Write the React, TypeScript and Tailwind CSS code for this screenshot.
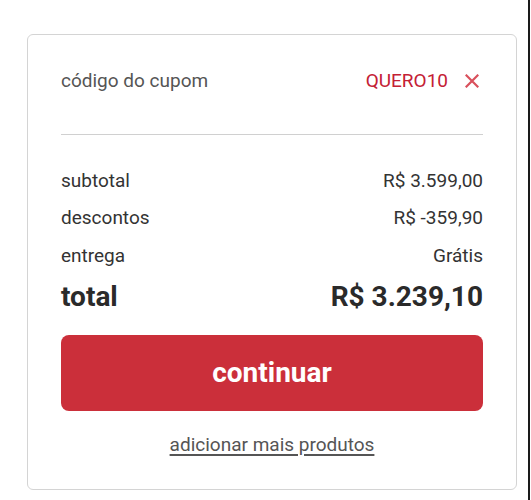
import React from "react";

export default function App() {
  return (
    <div
      className="relative w-[531px] h-[500px] bg-white overflow-hidden"
      style={{ fontFamily: "Roboto, 'Liberation Sans', sans-serif" }}
    >
      <div className="absolute right-[1px] top-0 h-full w-[2px] bg-[#1a1a1a]" />
      <div className="pl-[27px] pt-[34px]">
        <div className="w-[490px] rounded-[6px] border border-[#d4d4d4] bg-white px-[33px] pb-[32px]">
          <div className="flex h-[92px] items-center justify-between">
            <span className="text-[19px] leading-[24px] text-[#555555]">código do cupom</span>
            <div className="flex items-center gap-[17px]">
              <span className="text-[19px] leading-[24px] text-[#c42034]">QUERO10</span>
              <svg width="14" height="14" viewBox="0 0 14 14" className="mr-[4px]">
                <path d="M1.5 1.5 L12.5 12.5 M12.5 1.5 L1.5 12.5" stroke="#d9505c" strokeWidth="2.2" strokeLinecap="square" />
              </svg>
            </div>
          </div>
          <div className="mt-[7px] h-px bg-[#d0d0d0]" />
          <div className="mt-[32px] flex flex-col gap-[9.5px]">
            <div className="flex h-[28px] items-center justify-between text-[19px] text-[#333333]">
              <span>subtotal</span>
              <span>R$ 3.599,00</span>
            </div>
            <div className="flex h-[28px] items-center justify-between text-[19px] text-[#333333]">
              <span>descontos</span>
              <span>R$ -359,90</span>
            </div>
            <div className="flex h-[28px] items-center justify-between text-[19px] text-[#333333]">
              <span>entrega</span>
              <span>Grátis</span>
            </div>
          </div>
          <div className="mt-[8.5px] flex h-[36px] items-center justify-between text-[28px] font-bold text-[#2a2a2a]">
            <span>total</span>
            <span>R$ 3.239,10</span>
          </div>
          <button className="mt-[20px] flex h-[76px] w-full items-center justify-center rounded-[8px] bg-[#cb2f3a] text-[28px] font-bold text-white">
            continuar
          </button>
          <div className="mt-[22px] flex h-[24px] items-center justify-center">
            <a className="text-[19px] leading-[24px] text-[#555555] underline underline-offset-[3px] decoration-[1.5px]">
              adicionar mais produtos
            </a>
          </div>
        </div>
      </div>
    </div>
  );
}
